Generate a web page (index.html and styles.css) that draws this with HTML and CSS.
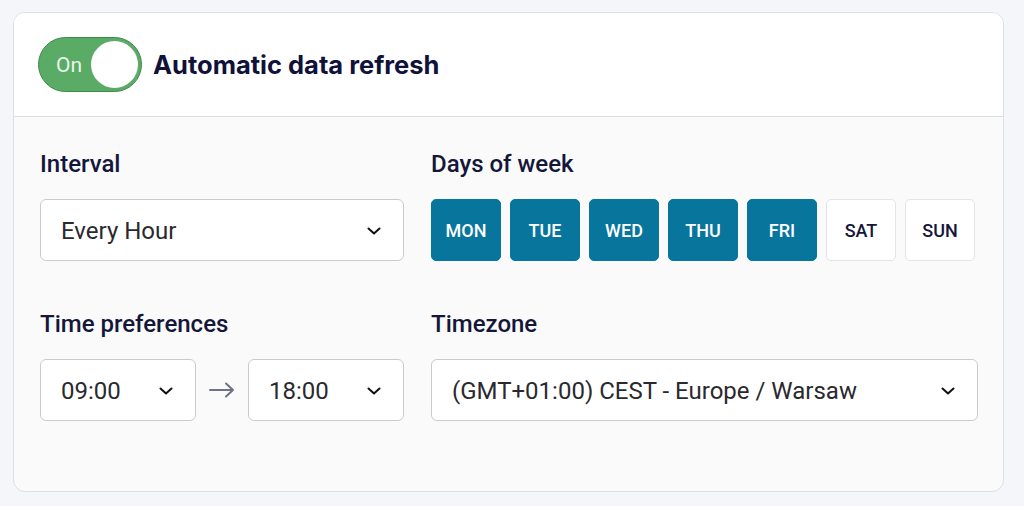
FILE: index.html
```html
<!DOCTYPE html>
<html lang="en">
<head>
<meta charset="utf-8">
<title>Automatic data refresh</title>
<link rel="stylesheet" href="styles.css">
</head>
<body>
<div class="card">
  <div class="card-header">
    <div class="toggle">
      <span class="toggle-label">On</span>
      <span class="toggle-knob"></span>
    </div>
    <h1 class="title">Automatic data refresh</h1>
  </div>
  <div class="card-body">
    <div class="field">
      <div class="label">Interval</div>
      <div class="select">
        <span class="select-text">Every Hour</span>
        <svg class="chev" width="14" height="8" viewBox="0 0 14 8"><path d="M1.5 1.5 L7 6.5 L12.5 1.5" fill="none" stroke="#111" stroke-width="2" stroke-linecap="round" stroke-linejoin="round"/></svg>
      </div>
    </div>
    <div class="field">
      <div class="label">Days of week</div>
      <div class="days">
        <div class="day on">MON</div>
        <div class="day on">TUE</div>
        <div class="day on">WED</div>
        <div class="day on">THU</div>
        <div class="day on">FRI</div>
        <div class="day">SAT</div>
        <div class="day">SUN</div>
      </div>
    </div>
    <div class="field">
      <div class="label">Time preferences</div>
      <div class="time-row">
        <div class="select small">
          <span class="select-text">09:00</span>
          <svg class="chev" width="14" height="8" viewBox="0 0 14 8"><path d="M1.5 1.5 L7 6.5 L12.5 1.5" fill="none" stroke="#111" stroke-width="2" stroke-linecap="round" stroke-linejoin="round"/></svg>
        </div>
        <svg class="arrow" width="26" height="16" viewBox="0 0 26 16"><path d="M1 8 H24 M17 1.5 L24 8 L17 14.5" fill="none" stroke="#6e7385" stroke-width="2" stroke-linecap="round" stroke-linejoin="round"/></svg>
        <div class="select small">
          <span class="select-text">18:00</span>
          <svg class="chev" width="14" height="8" viewBox="0 0 14 8"><path d="M1.5 1.5 L7 6.5 L12.5 1.5" fill="none" stroke="#111" stroke-width="2" stroke-linecap="round" stroke-linejoin="round"/></svg>
        </div>
      </div>
    </div>
    <div class="field">
      <div class="label">Timezone</div>
      <div class="select">
        <span class="select-text">(GMT+01:00) CEST - Europe / Warsaw</span>
        <svg class="chev" width="14" height="8" viewBox="0 0 14 8"><path d="M1.5 1.5 L7 6.5 L12.5 1.5" fill="none" stroke="#111" stroke-width="2" stroke-linecap="round" stroke-linejoin="round"/></svg>
      </div>
    </div>
  </div>
</div>
</body>
</html>
```
FILE: styles.css
```css
html, body {
  margin: 0;
  padding: 0;
}
body {
  background: #f5f6fa;
  font-family: Roboto, "Liberation Sans", sans-serif;
  padding: 12px 0 0 13px;
  height: 506px;
  box-sizing: border-box;
}
.card {
  width: 991px;
  height: 480px;
  box-sizing: border-box;
  border: 1px solid #dcdfe6;
  border-radius: 12px;
  background: #fafafa;
  overflow: hidden;
}
.card-header {
  height: 104px;
  box-sizing: border-box;
  background: #ffffff;
  border-bottom: 1px solid #dcdfe6;
  display: flex;
  align-items: center;
  padding-left: 24px;
  gap: 11px;
}
.toggle {
  width: 104px;
  height: 55px;
  box-sizing: border-box;
  border-radius: 28px;
  background: #5aab66;
  border: 1.5px solid #3f8a4b;
  display: flex;
  align-items: center;
  justify-content: space-between;
  padding: 0 3px 0 17px;
}
.toggle-label {
  color: #eaf6ec;
  font-size: 21px;
  font-family: Roboto, sans-serif;
}
.toggle-knob {
  width: 47px;
  height: 47px;
  border-radius: 50%;
  background: #ffffff;
}
.title {
  margin: 0;
  font-family: Inter, "Liberation Sans", sans-serif;
  font-weight: 700;
  font-size: 25.5px;
  color: #10123a;
}
.card-body {
  display: grid;
  grid-template-columns: 364px 547px;
  column-gap: 27px;
  row-gap: 49px;
  padding: 33px 0 0 26px;
}
.label {
  font-size: 24px;
  line-height: 28px;
  font-weight: 500;
  color: #14163a;
  margin-bottom: 21px;
}
.select {
  height: 62px;
  box-sizing: border-box;
  background: #ffffff;
  border: 1px solid #c9cbd0;
  border-radius: 6px;
  display: flex;
  align-items: center;
  justify-content: space-between;
  padding: 1px 22px 0 20px;
}
.select-text {
  font-size: 24px;
  color: #2a2a2e;
}
.chev {
  display: block;
}
.days {
  display: flex;
  gap: 9px;
}
.day {
  width: 70px;
  height: 62px;
  box-sizing: border-box;
  border-radius: 5px;
  border: 1px solid #e1e4e9;
  background: #ffffff;
  color: #14163a;
  font-size: 18px;
  font-weight: 500;
  display: flex;
  align-items: center;
  justify-content: center;
}
.day.on {
  background: #08759d;
  border-color: #08759d;
  color: #ffffff;
}
.time-row {
  display: flex;
  align-items: center;
  gap: 13px;
}
.select.small {
  flex: 1;
}
.arrow {
  display: block;
}
```
